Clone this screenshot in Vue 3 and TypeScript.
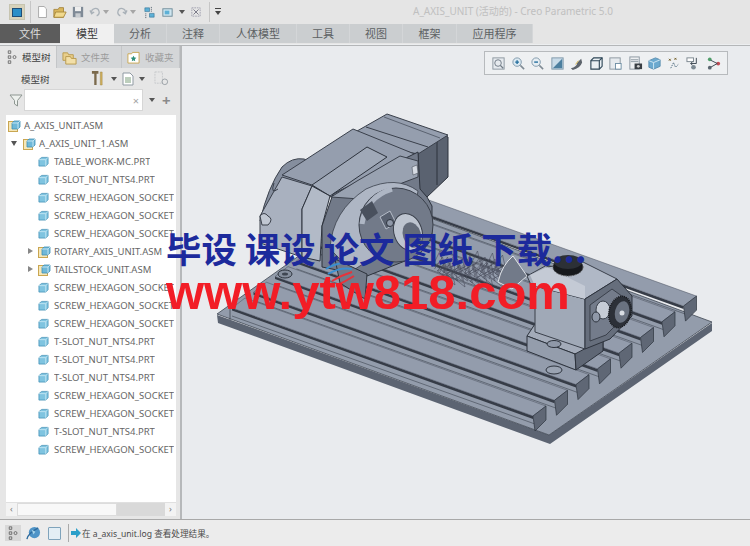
<template>
  <div class="app">
    <svg width="0" height="0" class="defs">
      <symbol id="prt" viewBox="0 0 12 12">
        <path d="M1 4 L4 1.5 H11 V8.5 L8.5 11 H1 Z" fill="#7fc4e0" stroke="#3f8fb5" stroke-width="0.8" />
        <path d="M1 4 H8.5 V11 M8.5 4 L11 1.5" fill="none" stroke="#d5eef8" stroke-width="0.8" />
      </symbol>
      <symbol id="asm" viewBox="0 0 13 13">
        <rect x="0.5" y="2.5" width="9" height="10" fill="#f6e7b8" stroke="#c9a651" />
        <path d="M4 4 L6 2 H12 V8 L10 10 H4 Z" fill="#6fb8d8" stroke="#3f8fb5" stroke-width="0.8" />
        <path d="M4 4 H10 V10 M10 4 L12 2" fill="none" stroke="#d5eef8" stroke-width="0.8" />
      </symbol>
    </svg>

    <header class="quick-bar">
      <span class="app-btn"><i></i></span>
      <span class="vsep"></span>
      <svg class="qi" viewBox="0 0 14 16" width="11" height="14"><path d="M2 1 H9 L12 4 V15 H2 Z" fill="#fff" stroke="#9a9a9a" /></svg>
      <svg class="qi" viewBox="0 0 16 16" width="14" height="14"><path d="M1 5 H6 L7 3 H12 V14 H1 Z" fill="#d9b65c" stroke="#a5853a" /><path d="M3 8 H15 L12 14 H1 Z" fill="#f1d98d" stroke="#a5853a" /></svg>
      <svg class="qi" viewBox="0 0 14 14" width="12" height="12"><rect x="1" y="1" width="12" height="12" fill="#7f8a96" /><rect x="3.5" y="1" width="7" height="5" fill="#eee" /><rect x="4" y="8.5" width="6" height="4.5" fill="#c8ccd0" /></svg>
      <svg class="qi dim" viewBox="0 0 14 12" width="12" height="10"><path d="M3 7 A4.5 4.5 0 1 1 9 10.5 M1 4 L3 8 L6 6" fill="none" stroke="#a9b1b8" stroke-width="1.6" /></svg>
      <span class="caret small"></span>
      <svg class="qi dim" viewBox="0 0 14 12" width="12" height="10"><path d="M11 7 A4.5 4.5 0 1 0 5 10.5 M13 4 L11 8 L8 6" fill="none" stroke="#a9b1b8" stroke-width="1.6" /></svg>
      <span class="caret small"></span>
      <svg class="qi" viewBox="0 0 14 14" width="13" height="13"><path d="M2 2 H7 V6 H2 Z M7 8 H12 V12 H7 Z" fill="#5db0d6" stroke="#2f6f91" stroke-width="0.6" /><path d="M9 1 V7 M3 8 V13" stroke="#3f4f5f" stroke-dasharray="1 1" /></svg>
      <svg class="qi" viewBox="0 0 14 14" width="13" height="13"><rect x="2" y="3" width="10" height="8" fill="#cfe6f0" stroke="#6d8a99" /><rect x="4" y="5" width="5" height="4" fill="#5db0d6" /></svg>
      <span class="caret"></span>
      <svg class="qi" viewBox="0 0 12 12" width="10" height="10"><rect x="1" y="1" width="10" height="10" fill="none" stroke="#99a" stroke-dasharray="2 1" /><path d="M3 3 L9 9 M9 3 L3 9" stroke="#667" /></svg>
      <span class="vsep right"></span>
      <span class="caret bar"></span>
      <span class="title">A_AXIS_UNIT (活动的) - Creo Parametric 5.0</span>
    </header>

    <nav class="ribbon">
      <span
        v-for="t in tabs"
        :key="t.label"
        class="tab"
        :class="t.kind"
        :style="{ width: t.w + 'px' }"
      >{{ t.label }}</span>
    </nav>

    <div class="work">
      <aside class="side">
        <div class="side-tabs">
          <div class="stab on">
            <svg viewBox="0 0 12 18" width="10" height="15"><path d="M1.5 1 H4.5 V4 H1.5 Z M1.5 7 H4.5 V10 H1.5 Z M1.5 13 H4.5 V16 H1.5 Z" fill="none" stroke="#444" stroke-width="0.8" /><circle cx="9" cy="8.5" r="1.8" fill="none" stroke="#444" stroke-width="0.8" /></svg>
            <span>模型树</span>
          </div>
          <div class="stab">
            <svg viewBox="0 0 16 16" width="15" height="15"><path d="M1 3 H6 L7 5 H12 V11 H1 Z" fill="#e9cf8c" stroke="#b99a4e" /><path d="M4 7 H9 L10 9 H15 V15 H4 Z" fill="#f2dfa8" stroke="#b99a4e" /></svg>
            <span class="faded">文件夹</span>
          </div>
          <div class="stab">
            <svg viewBox="0 0 14 14" width="13" height="13"><path d="M1 3 H5 L6 1.5 H13 V13 H1 Z" fill="#fff" stroke="#c9a651" /><path d="M7 5 L8 7 L10 7.4 L8.5 9 L8.8 11 L7 10 L5.2 11 L5.5 9 L4 7.4 L6 7 Z" fill="#2f8f7a" /></svg>
            <span class="faded">收藏夹</span>
          </div>
        </div>

        <div class="tree-head">
          <span class="tree-name">模型树</span>
          <svg class="tool" viewBox="0 0 14 18" width="13" height="17"><path d="M1 1 H8 V4 H6 V16 H3.5 V4 H1 Z" fill="#7b6a4c" /><path d="M10 2 H12 V16 H10 Z" fill="#d3b25e" stroke="#9b8241" stroke-width="0.5" /></svg>
          <span class="caret head-c"></span>
          <svg class="tool2" viewBox="0 0 12 14" width="12" height="14"><path d="M1 1 H8 L11 4 V13 H1 Z" fill="#fff" stroke="#8f9aa3" /><path d="M3 6 H9 M3 8 H9 M3 10 H9" stroke="#7a9e7a" /></svg>
          <span class="caret head-c"></span>
          <svg class="tool3" viewBox="0 0 16 16" width="15" height="15"><path d="M1 1 H9 V13 H1 Z" fill="none" stroke="#c5c8cb" stroke-dasharray="2 1" /><circle cx="11.5" cy="11.5" r="3" fill="none" stroke="#9aa0a5" /></svg>
        </div>

        <div class="filter-row">
          <svg viewBox="0 0 14 14" width="14" height="14"><path d="M1 2 H13 L8.5 7.5 V13 L5.5 11 V7.5 Z" fill="#eef1ee" stroke="#8d9691" /></svg>
          <div class="filter-input"><span>×</span></div>
          <span class="caret"></span>
          <span class="plus">+</span>
        </div>

        <div class="tree">
          <div class="rows">
            <div v-for="(r, i) in rows" :key="i" class="row" :style="{ paddingLeft: r.pad + 'px' }">
              <span class="arrow" :class="r.arrow"></span>
              <svg :width="r.asm ? 13 : 11" :height="r.asm ? 13 : 11" class="node-ico" :class="{ tight: r.asm }"><use :href="r.asm ? '#asm' : '#prt'" /></svg>
              <span class="label">{{ r.name }}</span>
            </div>
          </div>
          <div class="hscroll">
            <span class="sb-btn">‹</span>
            <span class="sb-thumb"></span>
            <span class="sb-track"></span>
            <span class="sb-btn">›</span>
          </div>
        </div>
      </aside>

      <main class="view">
        <div class="view-bar">
          <svg v-for="b in viewBtns" :key="b.id" viewBox="0 0 16 16" width="15" height="15" v-html="b.svg"></svg>
        </div>

        <svg class="model" viewBox="182 47 568 472" width="568" height="472">
          <!-- base plate -->
          <polygon points="217,316 549,436 712,324 712,332 550,445 218,324" fill="#5c6472" />
          <polygon points="217,315 379,200 712,323 549,436" fill="#939cab" stroke="#3f4652" stroke-width="0.8" />
          <line x1="230" y1="321" x2="230" y2="306" stroke="#3f4652" stroke-width="0.8" />

          <!-- t-slot rails -->
          <g v-for="(r, i) in rails" :key="'r' + i">
            <line :x1="r.slot[0]" :y1="r.slot[1]" :x2="r.slot[2]" :y2="r.slot[3]" stroke="#535a67" stroke-width="0.8" />
            <polygon :points="r.side" fill="#363c47" />
            <polygon :points="r.top" fill="#939cac" stroke="#4a515e" stroke-width="0.5" />
            <polygon :points="r.end" fill="#5f6775" stroke="#2d333d" stroke-width="0.7" />
          </g>

          <!-- motor, back hump -->
          <path d="M260 222 Q268 188 282 168 Q292 158 304 160 L330 170 L300 230 Z" fill="#858e9e" stroke="#3a404b" />
          <polygon points="418,153 443,135 448,138 448,178 427,198 418,190" fill="#5a6270" stroke="#2d333d" />
          <line x1="437" y1="142" x2="437" y2="186" stroke="#2d333d" />
          <polygon points="343,140 387,115 448,136 418,155" fill="#959eae" stroke="#3a404b" />
          <line x1="366" y1="128" x2="428" y2="148" stroke="#3a404b" />
          <line x1="384" y1="118" x2="440" y2="139" stroke="#5a6270" />

          <!-- gearbox -->
          <polygon points="282,176 353,130 417,156 330,198 312,186" fill="#959eae" stroke="#3a404b" />
          <polygon points="312,186 367,148 387,158 330,197" fill="#9fa8b7" stroke="#2d333d" />
          <polygon points="260,217 282,178 312,187 302,210 302,258 260,244" fill="#a9b1bf" stroke="#3a404b" />
          <polygon points="302,210 312,187 330,197 322,227 320,262 302,258" fill="#b2bac7" stroke="#2d333d" />
          <path d="M260 217 Q264 212 268 217 Q274 220 268 226 L262 226 Z" fill="#c0c7d2" stroke="#3a404b" />
          <path d="M274 184 Q270 196 278 190" fill="none" stroke="#3a404b" />

          <!-- front plate -->
          <polygon points="322,227 333,195 418,153 420,190 427,198 432,207 432,237 405,262 367,277 322,268" fill="#727a89" stroke="#2d333d" />
          <polygon points="331,198 357,182 400,157 418,162 418,178 360,200" fill="#99a2b1" stroke="#3a404b" />
          <polygon points="412,168 417,166 418,174 413,176" fill="#d6dbe3" stroke="#3a404b" stroke-width="0.5" />

          <!-- chuck -->
          <path d="M330 250 Q332 212 366 190 Q396 176 418 192 L410 235 L352 272 Z" fill="#aeb6c4" stroke="#3a404b" stroke-width="0.8" />
          <ellipse cx="396" cy="226" rx="37" ry="37" fill="#727a89" stroke="#3a404b" />
          <path d="M362 225 Q366 198 392 190" fill="none" stroke="#aeb6c4" stroke-width="5" />
          <polygon points="360,211 372,202 378,214 367,222" fill="#49505d" />
          <polygon points="380,218 390,212 396,224 386,230" fill="#596170" stroke="#b5bcc8" />
          <circle cx="390" cy="224" r="3.5" fill="#8f98a8" stroke="#2d333d" />
          <ellipse cx="408" cy="233" rx="14" ry="19" fill="#bdc4cf" stroke="#3a404b" transform="rotate(-18 408 233)" />
          <ellipse cx="412" cy="236" rx="9" ry="13" fill="#636b79" transform="rotate(-18 412 236)" />

          <!-- flange foot -->
          <polygon points="335,260 367,275 365,300 340,284" fill="#727a89" stroke="#2d333d" />
          <ellipse cx="285" cy="275" rx="7" ry="4" fill="#868f9e" stroke="#2d333d" />
          <ellipse cx="285" cy="275" rx="3" ry="1.5" fill="#3f4652" />

          <!-- lead screw mesh -->
          <g fill="none" stroke="#4a4d5c" stroke-width="0.6">
            <path v-for="(m, i) in mesh" :key="'m' + i" :d="m" />
          </g>

          <!-- tailstock -->
          <path d="M498 283 Q502 266 513 257 L527 277 L512 290 Z" fill="#727a89" stroke="#dfe2e7" />
          <polygon points="527,277 547,266 547,280 535,295" fill="#a3abb9" stroke="#3a404b" />
          <polygon points="527,337 575,355 603,352 603,340 578,330 535,325" fill="#a3abb9" stroke="#2d333d" />
          <polygon points="527,337 575,355 576,371 527,352" fill="#949dac" stroke="#2d333d" />
          <polygon points="576,371 575,355 603,340 603,352" fill="#5f6775" stroke="#2d333d" />
          <polygon points="535,287 585,300 585,350 535,333" fill="#a0a9b7" stroke="#3a404b" />
          <polygon points="535,287 547,268 583,263 617,280 585,300" fill="#b0b8c6" stroke="#3a404b" />
          <polygon points="530,276 547,268 585,287 585,300 535,287" fill="#c4cad5" />
          <polygon points="585,300 617,280 632,297 632,317 610,340 585,350" fill="#666e7c" stroke="#2d333d" />
          <path d="M590 306 L612 290 L626 300 L626 316 L606 336 L590 342 Z" fill="#747c8b" stroke="#3a404b" />
          <ellipse cx="603" cy="311" rx="7" ry="9" fill="#c6ccd6" stroke="#3a404b" />
          <ellipse cx="596" cy="318" rx="4" ry="5" fill="#8f98a8" stroke="#2d333d" />
          <ellipse cx="620" cy="313" rx="11" ry="16" fill="#2c3038" stroke="#15171b" stroke-width="1.5" stroke-dasharray="1 1" transform="rotate(14 620 313)" />
          <ellipse cx="622" cy="313" rx="7" ry="11" fill="#6a7280" transform="rotate(14 622 313)" />
          <circle cx="622" cy="314" r="2.5" fill="#d9dde3" />
          <ellipse cx="568" cy="268" rx="15" ry="9" fill="#17191d" stroke-dasharray="1.5 1" stroke="#555" />
          <ellipse cx="568" cy="263" rx="14" ry="7" fill="#2c3036" />
          <ellipse cx="554" cy="345" rx="7" ry="3.5" fill="#8f98a8" stroke="#2d333d" />
          <ellipse cx="554" cy="371" rx="8" ry="4" fill="#9aa3b2" stroke="#2d333d" />

          <!-- faint site logo swoosh under the big stamp -->
          <g fill="none" stroke-width="2">
            <path d="M326 270 Q338 262 352 265" stroke="#3b8fd0" />
            <path d="M328 275 Q340 268 352 270" stroke="#3b8fd0" />
            <path d="M332 282 Q342 276 352 273" stroke="#e8323a" />
            <path d="M336 287 Q346 282 354 277" stroke="#e8323a" />
          </g>
        </svg>
      </main>
    </div>

    <footer class="status">
      <span class="st-btn">
        <svg viewBox="0 0 12 18" width="10" height="15"><path d="M1.5 1 H4.5 V4 H1.5 Z M1.5 7 H4.5 V10 H1.5 Z M1.5 13 H4.5 V16 H1.5 Z" fill="none" stroke="#444" stroke-width="0.8" /><circle cx="9" cy="8.5" r="1.8" fill="none" stroke="#444" stroke-width="0.8" /></svg>
      </span>
      <svg class="globe" viewBox="0 0 16 16" width="15" height="15"><circle cx="9" cy="7" r="6" fill="#4f94c7" /><path d="M1 14 Q2 8 13 2" fill="none" stroke="#2d6b9e" stroke-width="1.5" /><path d="M6 4 L10 6 L8 9 Z" fill="#a7d4ea" /></svg>
      <span class="st-square"></span>
      <span class="st-sep"></span>
      <svg class="msg-arrow" viewBox="0 0 10 10" width="10" height="10"><path d="M0 3 H5 V0 L10 5 L5 10 V7 H0 Z" fill="#2b9fc9" /></svg>
      <span class="msg">在 a_axis_unit.log 查看处理结果。</span>
    </footer>

    <div class="stamp">
      <div class="stamp-cn">毕设 课设 论文 图纸 下载...</div>
      <div class="stamp-url">www.ytw818.com</div>
    </div>
  </div>
</template>

<script setup lang="ts">
interface Row { name: string; pad: number; asm?: boolean; arrow?: string }

const tabs = [
  { label: '文件', w: 60, kind: 'file' },
  { label: '模型', w: 54, kind: 'active' },
  { label: '分析', w: 53, kind: '' },
  { label: '注释', w: 53, kind: '' },
  { label: '人体模型', w: 77, kind: '' },
  { label: '工具', w: 53, kind: '' },
  { label: '视图', w: 53, kind: '' },
  { label: '框架', w: 54, kind: '' },
  { label: '应用程序', w: 76, kind: '' },
]

const prt = (name: string): Row => ({ name, pad: 32 })
const screw = 'SCREW_HEXAGON_SOCKET'

const rows: Row[] = [
  { name: 'A_AXIS_UNIT.ASM', pad: 2, asm: true },
  { name: 'A_AXIS_UNIT_1.ASM', pad: 5, asm: true, arrow: 'down' },
  prt('TABLE_WORK-MC.PRT'),
  prt('T-SLOT_NUT_NTS4.PRT'),
  prt(screw),
  prt(screw),
  prt(screw),
  { name: 'ROTARY_AXIS_UNIT.ASM', pad: 22, asm: true, arrow: 'right' },
  { name: 'TAILSTOCK_UNIT.ASM', pad: 22, asm: true, arrow: 'right' },
  prt(screw),
  prt(screw),
  prt(screw),
  prt('T-SLOT_NUT_NTS4.PRT'),
  prt('T-SLOT_NUT_NTS4.PRT'),
  prt('T-SLOT_NUT_NTS4.PRT'),
  prt(screw),
  prt(screw),
  prt('T-SLOT_NUT_NTS4.PRT'),
  prt(screw),
]

const viewBtns = [
  { id: 'fit', svg: '<rect x="2" y="2" width="12" height="12" fill="#e6eaee" stroke="#8b96a0"/><circle cx="7.5" cy="7.5" r="3.5" fill="none" stroke="#6f7a85"/><path d="M10 10l3 3" stroke="#6f7a85" stroke-width="1.4"/>' },
  { id: 'in', svg: '<circle cx="6.5" cy="6.5" r="4.5" fill="#dbe9f2" stroke="#7f98aa"/><path d="M4.5 6.5h4M6.5 4.5v4" stroke="#256f9e" stroke-width="1.5"/><path d="M10 10l4 4" stroke="#7f8a94" stroke-width="1.6"/>' },
  { id: 'out', svg: '<circle cx="6.5" cy="6.5" r="4.5" fill="#e6edf2" stroke="#7f98aa"/><path d="M4.5 6.5h4" stroke="#256f9e" stroke-width="1.5"/><path d="M10 10l4 4" stroke="#7f8a94" stroke-width="1.6"/>' },
  { id: 'win', svg: '<rect x="2" y="2" width="12" height="12" fill="#c8dbe8" stroke="#7f98aa"/><path d="M3 13L13 3V13Z" fill="#4c7f9f"/>' },
  { id: 'pan', svg: '<path d="M2 13Q8 12 9 7L13 3L14 7Q12 13 4 15Z" fill="#5d646c"/><path d="M7 9l3-4" stroke="#d8b64f"/>' },
  { id: 'box', svg: '<path d="M2 5L5 2H14V11L11 14H2Z" fill="#eaf0f4" stroke="#2e4657" stroke-width="1.2"/><path d="M2 5H11V14M11 5L14 2" fill="none" stroke="#2e4657" stroke-width="1.2"/>' },
  { id: 'sheet', svg: '<rect x="2" y="2" width="11" height="12" fill="#e6eaee" stroke="#8b96a0"/><rect x="8" y="8" width="6" height="6" fill="#fff" stroke="#6f8fa5"/>' },
  { id: 'cam', svg: '<rect x="2" y="1" width="10" height="13" fill="#eef0f2" stroke="#8b96a0"/><path d="M3 4h8M3 6h8" stroke="#8b96a0"/><rect x="7" y="8" width="8" height="6" fill="#3a3f45"/><circle cx="11" cy="11" r="1.5" fill="#ccc"/>' },
  { id: 'shade', svg: '<path d="M2 5L9 2L14 4V11L7 14L2 12Z" fill="#6ba9cf" stroke="#5b8fb0"/><path d="M2 5L7 7V14M7 7L14 4" fill="none" stroke="#cfe6f3"/>' },
  { id: 'dots', svg: '<path d="M2 3l2 2M4 3L2 5M8 2l2 2M10 2L8 4" stroke="#6f5a20"/><path d="M4 13L7 7L9 12L12 9" fill="none" stroke="#4d6b7f" stroke-dasharray="1.5 1"/>' },
  { id: 'flow', svg: '<rect x="1" y="2" width="7" height="4" fill="#fff" stroke="#7b868f"/><path d="M11 2V8H5M5 8l2-2M5 8l2 2" fill="none" stroke="#3b4650"/><circle cx="8" cy="12" r="2.5" fill="#7d8a93"/>' },
  { id: 'link', svg: '<circle cx="4" cy="3.5" r="2" fill="#4f9e6a"/><circle cx="4" cy="12.5" r="2" fill="#5b6670"/><circle cx="13" cy="8" r="2" fill="#c24b55"/><path d="M5 4.5L12 8L5 12" fill="none" stroke="#3b4650"/>' },
]

// rail ends measured along the right side of the table
const rails = Array.from({ length: 8 }, (_, i) => {
  const x = 533 + i * 21.5
  const y = 417 - i * 15.7
  const dx = -301
  const dy = -108
  const end = `${x},${y} ${x + 13},${y - 10} ${x + 13},${y + 4} ${x + 2},${y + 15}`
  const top = `${x},${y} ${x + dx},${y + dy} ${x + dx + 13},${y + dy - 10} ${x + 13},${y - 10}`
  const side = `${x},${y} ${x + dx},${y + dy} ${x + dx},${y + dy + 2.5} ${x},${y + 3}`
  const slot = [x + 2, y + 8, x + dx, y + dy + 8]
  return { end, top, side, slot }
})

// scribble standing in for the wire-shown thread
const mesh: string[] = Array.from({ length: 26 }, (_, i) => {
  const x = 432 + i * 2.5
  const y = 268 + (i % 5) * 2
  return `M${x} ${y} l8 ${-16 + (i % 3) * 4} l5 22 l-10 -8 l12 -6`
})
</script>

<style>
html, body {
  margin: 0;
  background: #e9ebee;
}
</style>

<style scoped>
.app {
  position: relative;
  width: 750px;
  height: 546px;
  overflow: hidden;
  display: flex;
  flex-direction: column;
  background: #e9ebee;
  font-family: "Noto Sans", "Noto Sans CJK SC", sans-serif;
  color: #555;
}
.defs { position: absolute; }

.quick-bar {
  height: 24px;
  flex: none;
  display: flex;
  align-items: center;
  padding-left: 9px;
  background: #e5e5e5;
  position: relative;
}
.app-btn {
  width: 14px;
  height: 14px;
  background: #d7d2bb;
  border: 1px solid #c7c4b0;
  display: flex;
  align-items: center;
  justify-content: center;
}
.app-btn i {
  width: 8px;
  height: 7px;
  background: #2b8fc8;
  border: 1px solid #1f4e78;
}
.vsep {
  width: 1px;
  height: 22px;
  background: #c6c6c6;
  margin: 0 6px 0 5px;
}
.vsep.right { margin: 0 5px 0 3px; height: 20px; }
.qi { margin-right: 5px; flex: none; }
.qi.dim { margin-right: 2px; }
.caret {
  width: 0;
  height: 0;
  border: 3px solid transparent;
  border-top: 4px solid #555;
  border-bottom: 0;
  margin-right: 6px;
  flex: none;
}
.caret.small { border-top-color: #a6a6a6; margin-right: 7px; }
.caret.bar { border-top-color: #444; position: relative; margin-top: 2px; }
.caret.bar::before {
  content: "";
  position: absolute;
  left: -3px;
  top: -7px;
  width: 6px;
  height: 1px;
  background: #444;
}
.title {
  position: absolute;
  left: 413px;
  top: 3px;
  font-size: 10px;
  line-height: 16px;
  color: #c0c0c0;
  white-space: nowrap;
}

.ribbon {
  height: 20px;
  flex: none;
  display: flex;
  background: #e5e5e5;
  border-bottom: 1px solid #eceef0;
}
.tab {
  box-sizing: border-box;
  text-align: center;
  font-size: 11px;
  line-height: 19px;
  height: 19px;
  color: #5d6163;
  background: #cbced0;
  border-right: 1px solid #d4d6d8;
}
.tab.file { background: #5c5c5c; color: #dcdcdc; border: 0; }
.tab.active { background: #f0f0f0; color: #3b3b3b; border: 0; height: 21px; }

.work {
  flex: 1;
  display: flex;
  min-height: 0;
  border-top: 1px solid #b4b6b8;
  border-bottom: 1px solid #a8a8a8;
}

.side {
  width: 180px;
  flex: none;
  display: flex;
  flex-direction: column;
  background: #e6e6e6;
  border-right: 2px solid #b6b8ba;
}
.side-tabs {
  height: 22px;
  flex: none;
  display: flex;
  background: #d4d6d8;
}
.stab {
  flex: none;
  width: 58px;
  display: flex;
  align-items: center;
  gap: 5px;
  padding-left: 5px;
  box-sizing: border-box;
  font-size: 9.5px;
  color: #555;
  white-space: nowrap;
  border-right: 1px solid #c4c6c8;
}
.stab.on { width: 57px; background: #e6e6e6; color: #3f3f3f; padding-left: 7px; gap: 5px; }
.stab:nth-child(2) { width: 65px; gap: 4px; }
.faded { color: #9b9b9b; }

.tree-head {
  height: 21px;
  flex: none;
  display: flex;
  align-items: center;
  font-size: 9.5px;
  color: #444;
}
.tree-name { margin-left: 21px; width: 70px; }
.tool { margin-right: 7px; }
.head-c { margin-right: 5px; }
.tool2 { margin-right: 5px; }
.tool3 { margin-left: 4px; }

.filter-row {
  height: 22px;
  flex: none;
  display: flex;
  align-items: center;
  padding-left: 9px;
}
.filter-input {
  width: 119px;
  height: 22px;
  margin: 0 6px 0 1px;
  background: #fff;
  border: 1px solid #d6d6d6;
  box-sizing: border-box;
  display: flex;
  justify-content: flex-end;
  align-items: center;
  padding-right: 3px;
  font-size: 11px;
  color: #a5a5a5;
}
.filter-row .caret { margin-right: 7px; }
.plus { font-size: 15px; font-weight: 700; color: #8a8a8a; line-height: 15px; }

.tree {
  flex: 1;
  min-height: 0;
  margin: 4px 4px 3px 6px;
  display: flex;
  flex-direction: column;
  background: #fff;
}
.rows { flex: 1; min-height: 0; overflow: hidden; padding-top: 1px; }
.row {
  height: 18px;
  display: flex;
  align-items: center;
  font-size: 9.5px;
  color: #666;
  white-space: nowrap;
  overflow: hidden;
}
.arrow { width: 0; height: 0; flex: none; }
.arrow.down {
  border: 3.5px solid transparent;
  border-top: 5px solid #555;
  border-bottom: 0;
  margin-right: 6px;
}
.arrow.right {
  border: 3.5px solid transparent;
  border-left: 5px solid #888;
  border-right: 0;
  margin-right: 5px;
}
.node-ico { flex: none; margin-right: 5px; }
.node-ico.tight { margin-right: 3px; }
.label { overflow: hidden; }

.hscroll {
  height: 13px;
  flex: none;
  display: flex;
  align-items: stretch;
  background: #e8e8e8;
  border-top: 1px solid #e0e0e0;
  font-size: 9px;
  line-height: 11px;
  color: #777;
  text-align: center;
}
.sb-btn { width: 11px; flex: none; background: #f3f3f3; }
.sb-thumb { width: 100px; background: #f8f8f8; border: 1px solid #dcdcdc; box-sizing: border-box; }
.sb-track { flex: 1; background: #d9d9d9; }

.view {
  flex: 1;
  position: relative;
  background: #e9ebee;
}
.view-bar {
  position: absolute;
  left: 302px;
  top: 5px;
  width: 244px;
  height: 24px;
  z-index: 2;
  box-sizing: border-box;
  display: flex;
  align-items: center;
  justify-content: space-between;
  padding: 0 6px;
  background: #eef0f2;
  border: 1px solid #b7babd;
}
.model {
  position: absolute;
  left: 0;
  top: 0;
}

.status {
  height: 26px;
  flex: none;
  display: flex;
  align-items: center;
  background: #ececec;
  padding-left: 5px;
}
.st-btn {
  width: 16px;
  height: 16px;
  background: #d8d8d8;
  display: flex;
  align-items: center;
  justify-content: center;
}
.globe { margin: 0 7px 0 5px; }
.st-square {
  width: 11px;
  height: 11px;
  background: #e3eef5;
  border: 1px solid #7fa3bb;
  border-radius: 1px;
}
.st-sep { width: 1px; height: 18px; background: #aaa; margin: 0 2px 0 7px; }
.msg-arrow { margin-right: 1px; }
.msg { font-size: 8.6px; color: #4a4a4a; }

.stamp {
  position: absolute;
  left: 166px;
  top: 226px;
  font-weight: 700;
  white-space: nowrap;
  pointer-events: none;
}
.stamp-cn {
  font-family: "Noto Sans CJK SC", sans-serif;
  font-size: 35.4px;
  line-height: 44px;
  color: #1c2a9c;
}
.stamp-url {
  font-family: "Liberation Sans", sans-serif;
  font-size: 49px;
  line-height: 44px;
  color: #f21d26;
}
</style>
